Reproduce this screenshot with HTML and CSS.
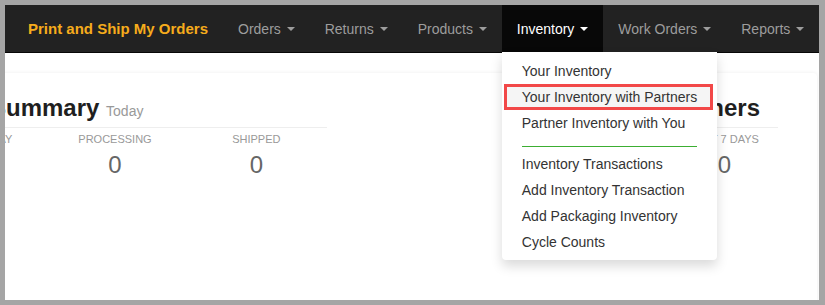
FILE: index.html
```html
<!DOCTYPE html>
<html>
<head>
<meta charset="utf-8">
<link rel="stylesheet" href="styles.css">
</head>
<body>
<div class="frame">
  <nav class="navbar">
    <a class="brand">Print and Ship My Orders</a>
    <ul class="nav">
      <li><a>Orders <span class="caret"></span></a></li>
      <li><a>Returns <span class="caret"></span></a></li>
      <li><a>Products <span class="caret"></span></a></li>
      <li class="active"><a>Inventory <span class="caret"></span></a>
        <ul class="dropdown">
          <li>Your Inventory</li>
          <li class="marked">Your Inventory with Partners</li>
          <li>Partner Inventory with You</li>
          <li class="divider"></li>
          <li>Inventory Transactions</li>
          <li>Add Inventory Transaction</li>
          <li>Add Packaging Inventory</li>
          <li>Cycle Counts</li>
        </ul>
      </li>
      <li><a>Work Orders <span class="caret"></span></a></li>
      <li><a>Reports <span class="caret"></span></a></li>
    </ul>
  </nav>
  <div class="main">
    <div class="card">
      <section class="summary left">
        <h2>Order Summary <small>Today</small></h2>
        <div class="stats">
          <div class="stat"><div class="label">Ready Today</div><div class="num">0</div></div>
          <div class="stat"><div class="label">Processing</div><div class="num">0</div></div>
          <div class="stat"><div class="label">Shipped</div><div class="num">0</div></div>
        </div>
      </section>
      <section class="summary right">
        <h2>Partners</h2>
        <div class="stats">
          <div class="stat"><div class="label">Last 7 Days</div><div class="num">0</div></div>
        </div>
      </section>
    </div>
  </div>
</div>
</body>
</html>
```

FILE: styles.css
```css
* { box-sizing: border-box; }
html, body { margin: 0; }
body {
  background: #a5a5a5;
  padding: 5px 6px 5px 5px;
  font-family: "Liberation Sans", Arial, sans-serif;
}
.frame {
  position: relative;
  width: 814px;
  height: 295px;
  background: #fff;
  overflow: hidden;
}
.navbar {
  display: flex;
  align-items: stretch;
  height: 48px;
  background: #222;
  border-bottom: 1px solid #080808;
  padding-left: 8px;
  position: relative;
  z-index: 2;
}
.brand {
  display: flex;
  align-items: center;
  flex-shrink: 0;
  white-space: nowrap;
  padding: 0 15px 0 15px;
  color: #f6ac1c;
  font-weight: bold;
  font-size: 15px;
}
.nav {
  display: flex;
  flex-shrink: 0;
  list-style: none;
  margin: 0;
  padding: 0;
}
.nav > li {
  position: relative;
  display: flex;
  flex-shrink: 0;
}
.nav > li > a {
  display: flex;
  align-items: center;
  padding: 0 15px;
  color: #9d9d9d;
  font-size: 14px;
  white-space: pre;
}
.nav > li.active > a {
  background: #080808;
  color: #fff;
}
.caret {
  display: inline-block;
  width: 0;
  height: 0;
  margin-left: 2px;
  border-top: 4px solid;
  border-left: 4px solid transparent;
  border-right: 4px solid transparent;
}
.dropdown {
  position: absolute;
  top: 47px;
  left: 0;
  width: 215px;
  list-style: none;
  margin: 0;
  padding: 6px 0 5px;
  background: #fff;
  border-radius: 0 0 4px 4px;
  box-shadow: 0 6px 12px rgba(0, 0, 0, 0.15);
}
.dropdown li {
  padding: 0 20px;
  line-height: 26px;
  height: 26px;
  font-size: 14px;
  color: #333;
  white-space: nowrap;
}
.dropdown li.marked {
  margin: 0 4px 0 2px;
  padding-left: 18px;
  background: #f5f5f5;
  box-shadow: inset 0 0 0 3px #f24848;
}
.dropdown li.divider {
  height: 0;
  padding: 0;
  margin: 10px 20px 4px;
  border-top: 1px solid #3cae32;
}
.main {
  padding: 20px 2px 0 0;
}
.card {
  display: flex;
  justify-content: space-between;
  margin-left: -115px;
  height: 260px;
  background: #fff;
  border-radius: 4px;
  box-shadow: 0 0 4px rgba(0, 0, 0, 0.07);
  padding: 22px 39px 0 13px;
}
.summary h2 {
  margin: 0 0 6px;
  font-size: 24px;
  line-height: 26px;
  height: 26px;
  font-weight: bold;
  color: #1f1f1f;
  padding-left: 15px;
  white-space: nowrap;
}
.summary h2 small {
  font-size: 14px;
  line-height: 1;
  font-weight: normal;
  color: #999;
}
.left { width: 424px; }
.right { width: 107px; }
.right h2 {
  display: flex;
  justify-content: flex-end;
  padding-right: 18px;
}
.stats {
  display: flex;
  border-top: 1px solid #eee;
  padding-top: 4px;
}
.stat {
  flex: 1;
  text-align: center;
}
.label {
  font-size: 11px;
  line-height: 14px;
  text-transform: uppercase;
  color: #999;
  white-space: nowrap;
}
.num {
  margin-top: 5px;
  font-size: 24px;
  line-height: 28px;
  color: #666;
}
```
